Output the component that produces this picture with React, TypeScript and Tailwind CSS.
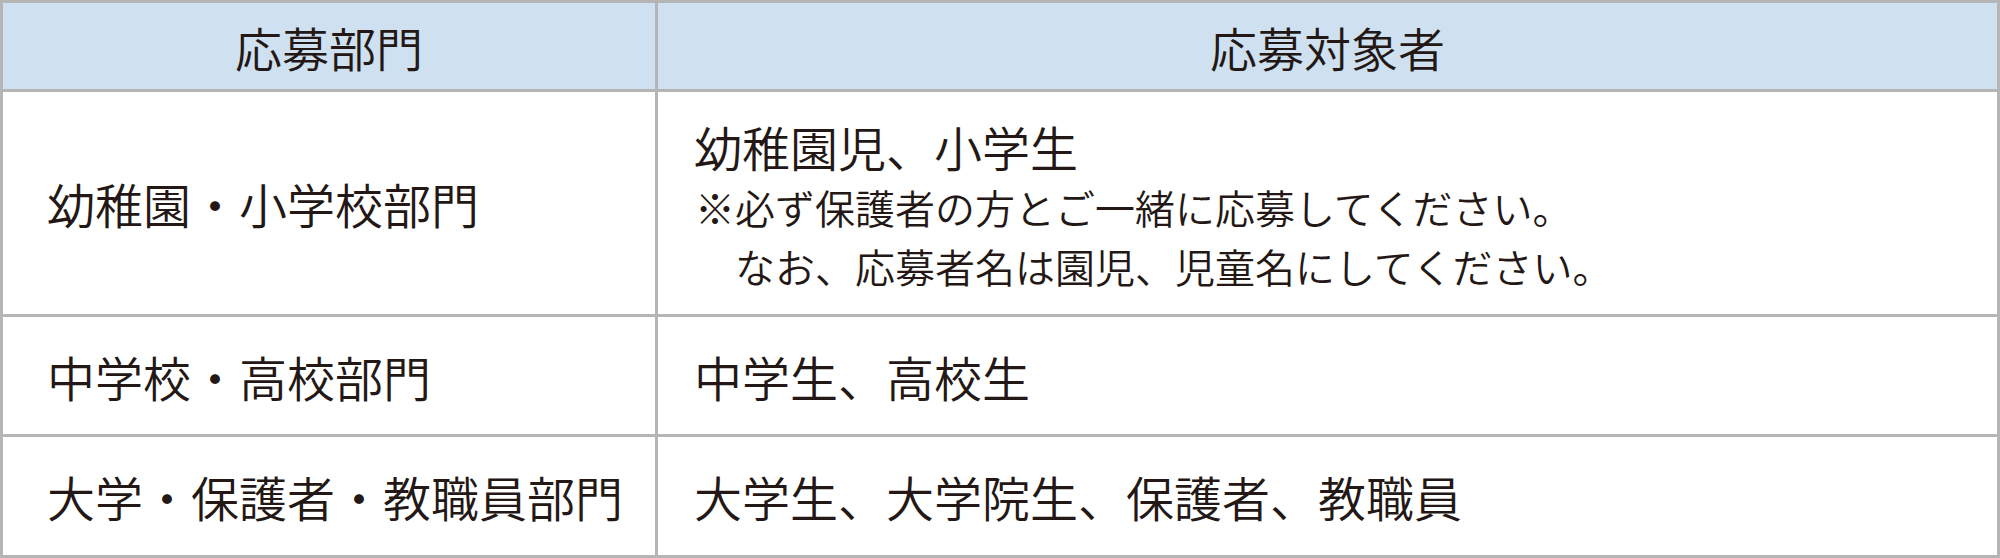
const rows = [
  {
    division: "幼稚園・小学校部門",
    target: "幼稚園児、小学生",
    notes: ["※必ず保護者の方とご一緒に応募してください。", "　なお、応募者名は園児、児童名にしてください。"],
  },
  { division: "中学校・高校部門", target: "中学生、高校生" },
  { division: "大学・保護者・教職員部門", target: "大学生、大学院生、保護者、教職員" },
];

const App = () => {
  return (
    <div className="w-[2000px] h-[558px] bg-white">
      <div
        className="grid grid-cols-[652px_1fr] grid-rows-[86px_222px_117px_118px] gap-[3px] p-[3px] h-full bg-[#b5b5b5] text-[#231815] font-[350]"
        style={{ fontFamily: '"Noto Sans CJK JP", "Noto Sans", sans-serif' }}
      >
        <div className="bg-[#cfe0f0] flex items-center justify-center text-[47px] leading-none">応募部門</div>
        <div className="bg-[#cfe0f0] flex items-center justify-center text-[47px] leading-none">応募対象者</div>

        {rows.map((r) => (
          <>
            <div key={r.division + "-d"} className="bg-white flex items-center pl-[44px] text-[48px] leading-none">
              {r.division}
            </div>
            <div
              key={r.division + "-t"}
              className={
                r.notes
                  ? "bg-white flex flex-col pt-[24px] pl-[36px]"
                  : "bg-white flex items-center pl-[36px] text-[48px] leading-none"
              }
            >
              {r.notes ? (
                <>
                  <div className="text-[48px] leading-[60px]">{r.target}</div>
                  <div className="mt-[2px] text-[40px] leading-[59px] pl-[1px]">{r.notes[0]}</div>
                  <div className="text-[40px] leading-[59px] pl-[1px]">{r.notes[1]}</div>
                </>
              ) : (
                r.target
              )}
            </div>
          </>
        ))}
      </div>
    </div>
  );
};

export default App;
